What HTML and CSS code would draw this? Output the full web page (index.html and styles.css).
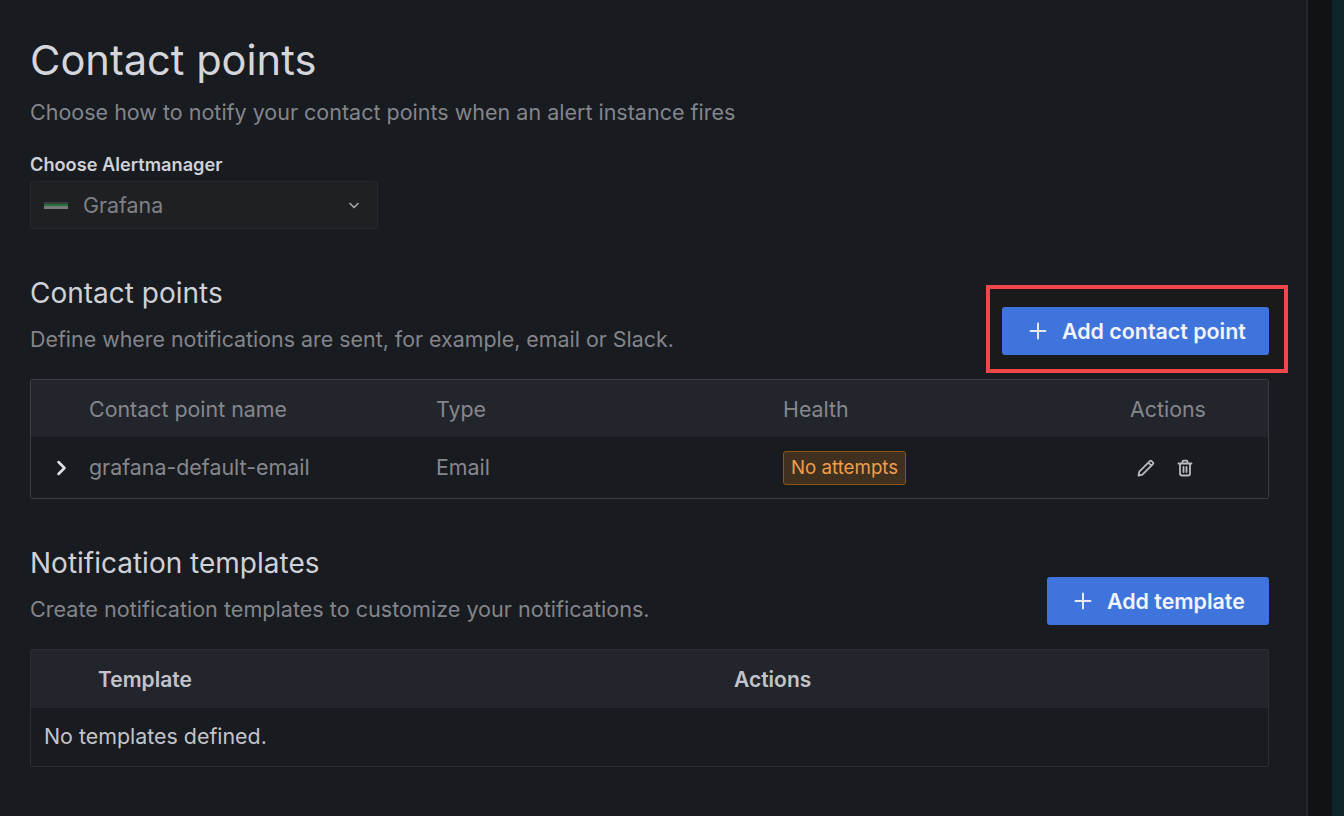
FILE: index.html
```html
<html>
<head>
    <title>Contact points</title>
    <link rel="stylesheet" href="styles.css">
</head>
<body>
    <div class="shell">
        <main class="page">
            <h1 class="title">Contact points</h1>
            <p class="subtitle">Choose how to notify your contact points when an alert instance fires</p>

            <div class="field-label">Choose Alertmanager</div>
            <div class="select">
                <span class="select-logo"></span>
                <span class="select-value">Grafana</span>
                <svg class="select-arrow" width="14" height="14" viewBox="0 0 14 14"><path d="M3 5.500 7 9.500 11 5.500" fill="none" stroke="#a3a5a9" stroke-width="1.700" stroke-linecap="round" stroke-linejoin="round"/></svg>
            </div>

            <section class="section section-contact">
                <div class="section-text">
                    <h2 class="section-title">Contact points</h2>
                    <p class="section-desc">Define where notifications are sent, for example, email or Slack.</p>
                </div>
                <div class="highlight">
                    <button class="btn btn-contact">
                        <svg width="18" height="18" viewBox="0 0 18 18"><path d="M9 1.500v15M1.500 9h15" stroke="#e6e9f2" stroke-width="2" stroke-linecap="round"/></svg>
                        Add contact point
                    </button>
                </div>
            </section>

            <div class="table contact-table">
                <div class="row head contact-row">
                    <span></span>
                    <span>Contact point name</span>
                    <span>Type</span>
                    <span>Health</span>
                    <span>Actions</span>
                </div>
                <div class="row body contact-row">
                    <svg class="expander" width="14" height="18" viewBox="0 0 14 18"><path d="M3.500 3 9.500 9l-6 6" fill="none" stroke="#e0e2e5" stroke-width="2.500" stroke-linecap="round" stroke-linejoin="round"/></svg>
                    <span class="cell-text">grafana-default-email</span>
                    <span class="cell-text">Email</span>
                    <span><span class="badge">No attempts</span></span>
                    <span class="actions">
                        <svg width="20" height="20" viewBox="0 0 20 20"><path d="M2.500 17.500 3.300 13.600 13.800 3.100a1.300 1.300 0 0 1 1.800 0l1.300 1.300a1.300 1.300 0 0 1 0 1.800L6.400 16.700ZM12.300 4.600l3.100 3.100" fill="none" stroke="#b8babe" stroke-width="1.800" stroke-linejoin="round"/></svg>
                        <svg width="20" height="20" viewBox="0 0 20 20"><path d="M3.500 5.500h13M7.500 5.500V3.700a1 1 0 0 1 1-1h3a1 1 0 0 1 1 1v1.800M5 5.500v10a2 2 0 0 0 2 2h6a2 2 0 0 0 2-2v-10M8.500 9v5M11.500 9v5" fill="none" stroke="#b8babe" stroke-width="1.800" stroke-linecap="round" stroke-linejoin="round"/></svg>
                    </span>
                </div>
            </div>

            <section class="section section-templates">
                <div class="section-text">
                    <h2 class="section-title">Notification templates</h2>
                    <p class="section-desc section-desc-wide">Create notification templates to customize your notifications.</p>
                </div>
                <button class="btn btn-template">
                    <svg width="18" height="18" viewBox="0 0 18 18"><path d="M9 1.500v15M1.500 9h15" stroke="#e6e9f2" stroke-width="2" stroke-linecap="round"/></svg>
                    Add template
                </button>
            </section>

            <div class="table template-table">
                <div class="row head template-row">
                    <span>Template</span>
                    <span>Actions</span>
                </div>
                <div class="row body empty">No templates defined.</div>
            </div>
        </main>
        <div class="rail"></div>
        <div class="edge"></div>
    </div>
</body>
</html>
```

FILE: styles.css
```css
html, body {
    margin: 0;
    height: 100%;
    overflow: hidden;
    background: #181b1f;
}
.shell {
    display: flex;
    height: 816px;
    font-family: Inter, "Noto Sans", sans-serif;
}
.page {
    width: 1308px;
    box-sizing: border-box;
    padding: 34px 37px 0 30px;
    color: #ccccdc;
    border-right: 2px solid #25272b;
}
.rail {
    width: 24px;
    background: #111216;
}
.edge {
    flex: 1;
    background: #0b2528;
}
.title {
    margin: 0;
    font-size: 41.6px;
    line-height: 52px;
    font-weight: 400;
    color: #d5d6dc;
}
.subtitle {
    margin: 0;
    padding-top: 13px;
    font-size: 21.5px;
    line-height: 26px;
    color: #83858b;
}
.field-label {
    margin-top: 28px;
    font-size: 18.2px;
    line-height: 22px;
    font-weight: 600;
    color: #d0d1d8;
}
.select {
    display: flex;
    align-items: center;
    width: 348px;
    height: 48px;
    box-sizing: border-box;
    margin-top: 6px;
    padding: 0 16px 0 13px;
    background: #1e2024;
    border: 1px solid #26282c;
    border-radius: 3px;
}
.select-logo {
    width: 24px;
    height: 7px;
    background: linear-gradient(#3a3c40 0 30%, #24713a 30% 60%, #77797a 60%);
}
.select-value {
    flex: 1;
    margin-left: 15px;
    font-size: 21.4px;
    color: #7f8187;
}
.section {
    display: flex;
    justify-content: space-between;
}
.section-contact {
    margin-top: 43px;
    height: 107px;
}
.section-templates {
    margin-top: 43px;
    height: 107px;
    align-items: flex-start;
}
.section-text {
    padding-top: 4px;
}
.section-title {
    margin: 0;
    font-size: 28px;
    line-height: 34px;
    font-weight: 400;
    color: #d0d1d8;
}
.section-desc {
    margin: 16px 0 0;
    font-size: 21.4px;
    line-height: 26px;
    color: #83858b;
}
.section-desc-wide {
    font-size: 21.6px;
}
.highlight {
    align-self: flex-start;
    margin: 13px -19px 0 0;
    padding: 18px 15px 14px 12px;
    border: 4px solid #f2464a;
    background: #1a1a1b;
}
.btn {
    display: flex;
    align-items: center;
    gap: 15px;
    height: 48px;
    border: none;
    border-radius: 3px;
    background: #3f74dd;
    color: #f2f4fa;
    font-family: inherit;
    font-size: 21.4px;
    font-weight: 600;
}
.btn-contact {
    width: 267px;
    padding: 0 0 0 27px;
}
.btn-template {
    width: 222px;
    padding: 0 0 0 27px;
    margin-top: 35px;
}
.table {
    width: 1239px;
    box-sizing: border-box;
    border: 1px solid #3b3d42;
    border-radius: 2px;
    font-size: 21.4px;
}
.template-table {
    border-color: #2b2d31;
}
.row {
    display: grid;
    align-items: center;
}
.head {
    height: 57px;
    background: #22252b;
    color: #85878d;
}
.body {
    height: 61px;
    background: #181b1f;
    color: #85878d;
}
.contact-row {
    grid-template-columns: 58px 347px 347px 347px 1fr;
}
.cell-text {
    margin-bottom: 2px;
}
.expander {
    margin-left: 24px;
}
.actions {
    display: flex;
    gap: 19px;
    padding-left: 6px;
}
.badge {
    display: inline-block;
    padding: 0 7px;
    height: 34px;
    line-height: 32px;
    box-sizing: border-box;
    font-size: 18.7px;
    color: #ef9f4c;
    background: #40301f;
    border: 1px solid #8f5412;
    border-radius: 3px;
}
.template-row {
    grid-template-columns: 636px 1fr;
    height: 58px;
    padding-left: 67px;
    font-size: 21px;
    font-weight: 600;
    color: #c3c4cb;
}
.empty {
    display: flex;
    align-items: center;
    box-sizing: border-box;
    padding: 0 0 2px 13px;
    height: 58px;
    color: #c3c4cb;
}
```
